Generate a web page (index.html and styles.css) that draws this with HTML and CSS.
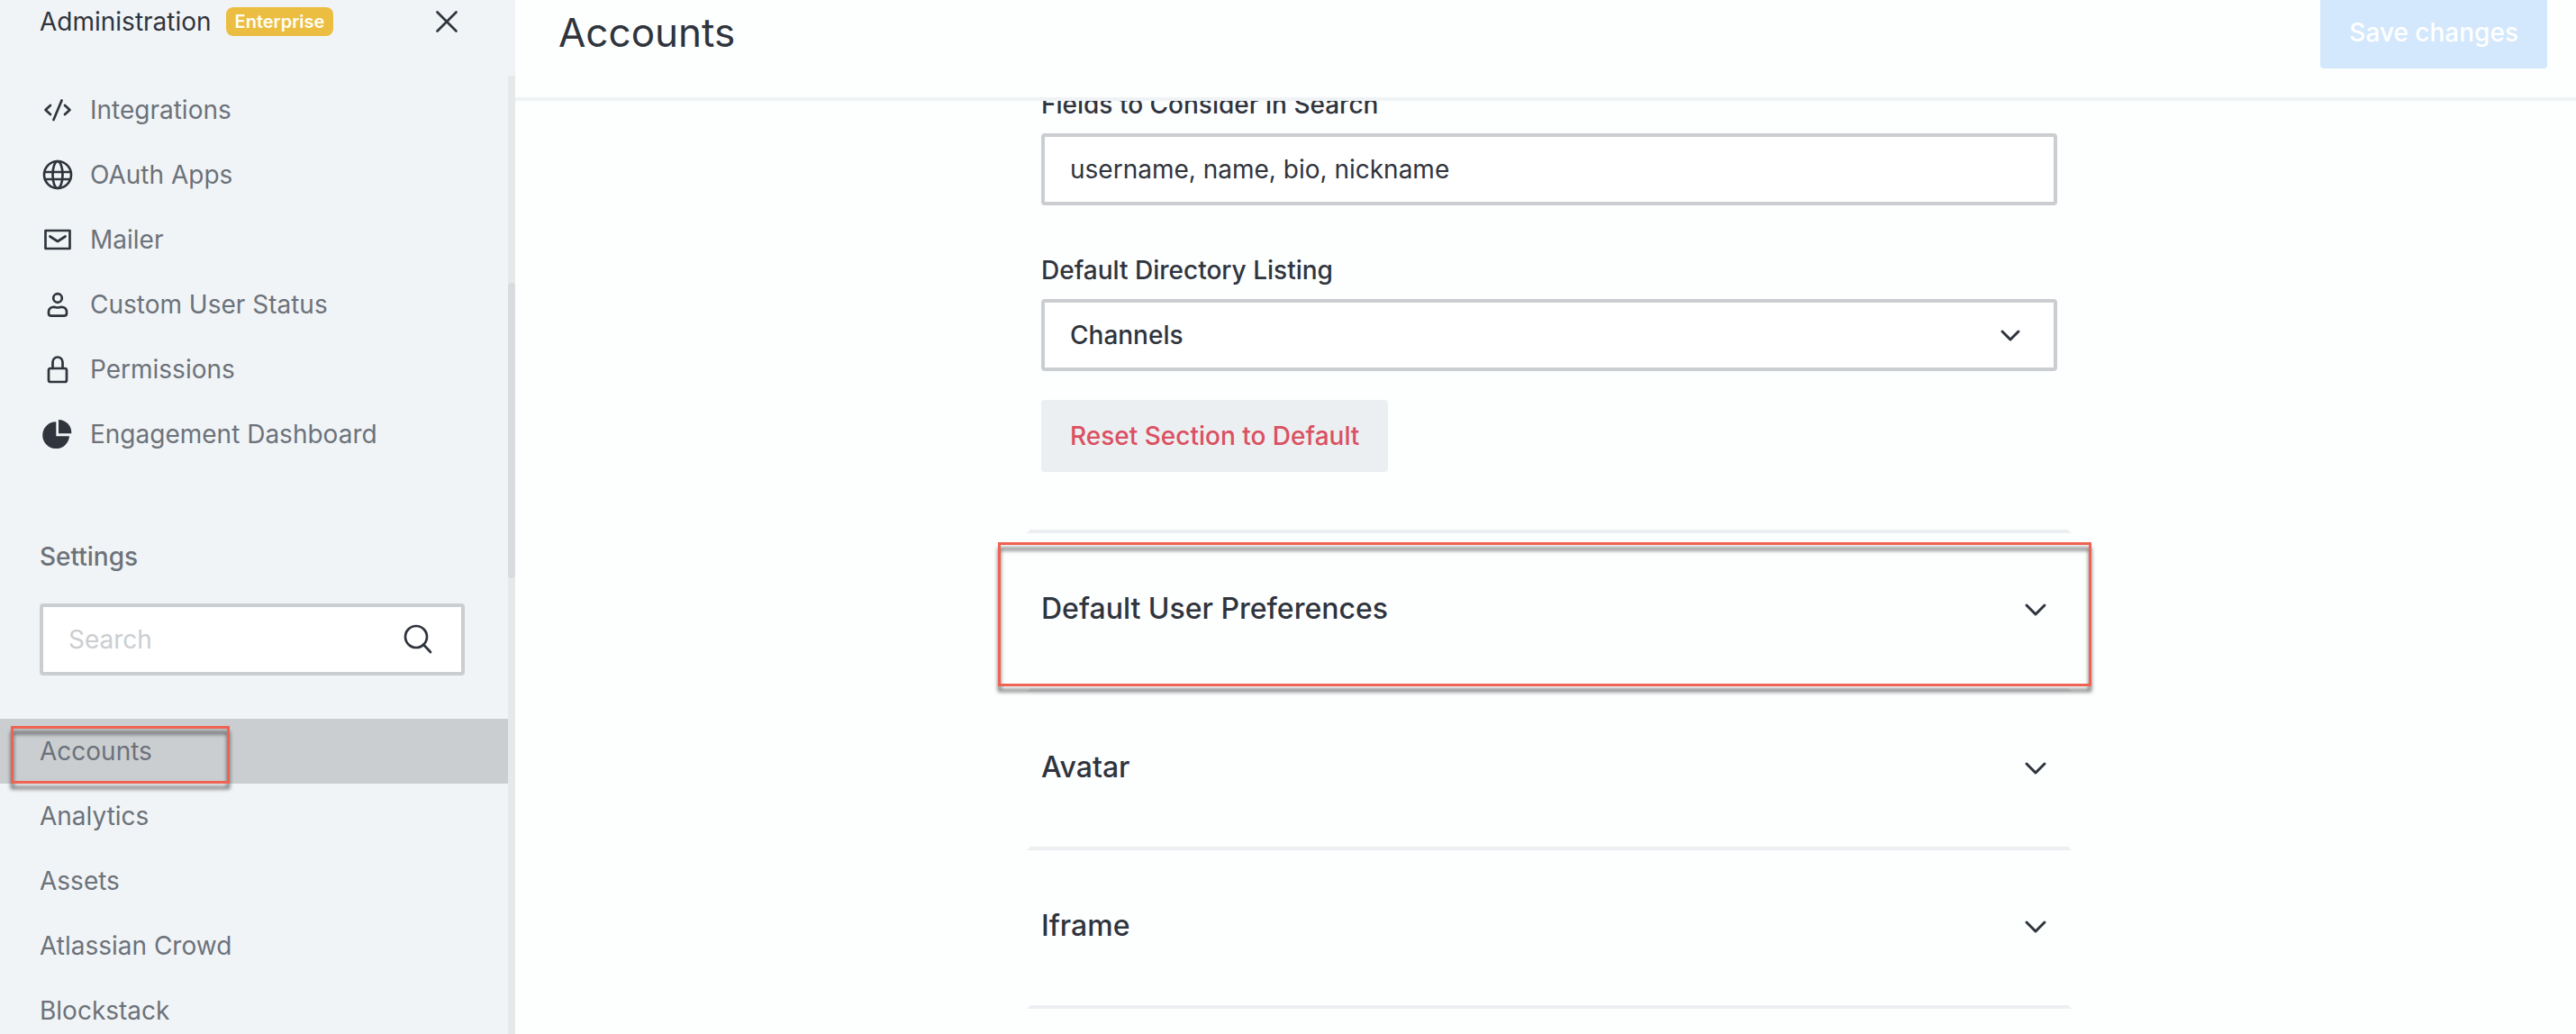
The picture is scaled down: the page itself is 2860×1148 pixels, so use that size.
FILE: index.html
```html
<!DOCTYPE html>
<html lang="en">
<head>
<meta charset="utf-8">
<title>Accounts - Administration</title>
<link rel="stylesheet" href="styles.css">
</head>
<body>
<div class="app">
  <aside class="sidebar">
    <header class="sidebar-header">
      <span class="sidebar-title">Administration</span>
      <span class="badge">Enterprise</span>
      <button class="close" type="button" aria-label="Close">
        <svg viewBox="0 0 40 40"><path d="M9.500 9.500 30.500 30.500M30.500 9.500 9.500 30.500"/></svg>
      </button>
    </header>
    <div class="sidebar-body">
      <div class="sidebar-content">
        <nav class="nav">
          <a class="nav-item" href="#integrations">
            <svg class="icon" viewBox="0 0 40 40"><path d="M12 15 6.500 20l5.500 5M28 15l5.500 5-5.500 5M24.500 9.500 15.500 31"/></svg>
            Integrations
          </a>
          <a class="nav-item" href="#oauth">
            <svg class="icon" viewBox="0 0 40 40"><circle cx="20" cy="20" r="15"/><ellipse cx="20" cy="20" rx="5.500" ry="15"/><path d="M6 17h28M6 25h28"/></svg>
            OAuth Apps
          </a>
          <a class="nav-item" href="#mailer">
            <svg class="icon" viewBox="0 0 40 40"><path d="M6.500 10h27v20h-27zM11.500 16.500l8.500 5.500 8.500-5.500"/></svg>
            Mailer
          </a>
          <a class="nav-item" href="#user-status">
            <svg class="icon" viewBox="0 0 40 40"><circle cx="20" cy="13" r="4.800"/><path d="M14.500 23c3-.5 3.500.5 5.500.500s2.500-1 5.500-.500c3 .500 4.500 2.500 4.500 5.500v1.500c0 2-1 2.700-3 2.700H13c-2 0-3-.7-3-2.700v-1.500c0-3 1.500-5 4.500-5.500z"/></svg>
            Custom User Status
          </a>
          <a class="nav-item" href="#permissions">
            <svg class="icon" viewBox="0 0 40 40"><rect x="10" y="19" width="20" height="15" rx="2"/><path d="M14.500 19v-7a5.500 5.500 0 0 1 11 0v7"/></svg>
            Permissions
          </a>
          <a class="nav-item" href="#engagement">
            <svg class="icon icon-solid" viewBox="0 0 40 40"><path d="M18.300 6.300v16h14.700A14.900 14.900 0 1 1 18.300 6.300z"/><path d="M21 4a14.300 14.300 0 0 1 14.300 15.300H21z"/></svg>
            Engagement Dashboard
          </a>
        </nav>
        <h2 class="settings-title">Settings</h2>
        <label class="search">
          <input class="search-input" type="search" placeholder="Search" aria-label="Search">
          <svg class="icon" viewBox="0 0 40 40"><circle cx="18" cy="17" r="12"/><path d="M26 25.500 34 34"/></svg>
        </label>
        <nav class="nav settings-nav">
          <a class="nav-item active" href="#accounts">Accounts<span class="highlight highlight-nav"></span></a>
          <a class="nav-item" href="#analytics">Analytics</a>
          <a class="nav-item" href="#assets">Assets</a>
          <a class="nav-item" href="#crowd">Atlassian Crowd</a>
          <a class="nav-item" href="#blockstack">Blockstack</a>
        </nav>
      </div>
      <div class="scrollbar"><div class="scrollbar-thumb"></div></div>
    </div>
  </aside>
  <main class="main">
    <header class="main-header">
      <h1 class="main-title">Accounts</h1>
      <button class="save" type="button" disabled>Save changes</button>
    </header>
    <div class="main-body">
      <div class="page">
        <form class="fields">
          <div class="field">
            <label class="label" for="search-fields">Fields to Consider in Search</label>
            <input class="control" id="search-fields" type="text" value="username, name, bio, nickname">
          </div>
          <div class="field">
            <label class="label" for="listing">Default Directory Listing</label>
            <div class="select-wrap">
              <select class="control select" id="listing"><option>Channels</option><option>Users</option></select>
              <svg class="chevron select-chevron" viewBox="0 0 32 32"><path d="M7 12l9 9 9-9"/></svg>
            </div>
          </div>
          <button class="reset" type="button">Reset Section to Default</button>
        </form>
        <section class="section">
          <button class="section-toggle" type="button">Default User Preferences
            <svg class="chevron" viewBox="0 0 32 32"><path d="M6 12l10 10 10-10"/></svg>
          </button>
          <span class="highlight highlight-section"></span>
        </section>
        <section class="section">
          <button class="section-toggle" type="button">Avatar
            <svg class="chevron" viewBox="0 0 32 32"><path d="M6 12l10 10 10-10"/></svg>
          </button>
        </section>
        <section class="section">
          <button class="section-toggle" type="button">Iframe
            <svg class="chevron" viewBox="0 0 32 32"><path d="M6 12l10 10 10-10"/></svg>
          </button>
        </section>
      </div>
    </div>
  </main>
</div>
</body>
</html>
```

FILE: styles.css
```css
* { box-sizing: border-box; }

body {
  margin: 0;
  background: #fdfefe;
  color: #2f343d;
  font: 400 28px/40px Inter, sans-serif;
}

button, input, select { font: inherit; color: inherit; margin: 0; }

.app { display: flex; height: 100vh; overflow: hidden; }

.sidebar {
  display: flex;
  flex-direction: column;
  flex: 0 0 20%;
  max-width: 572px;
  background: #f1f4f6;
}

.sidebar-header {
  display: flex;
  align-items: center;
  gap: 16px;
  height: 84px;
  padding: 0 56px 36px 44px;
}

.badge {
  padding: 0 10px;
  border-radius: 8px;
  background: #ebbd41;
  color: #fffef5;
  font-size: 20px;
  font-weight: 600;
  line-height: 32px;
}

.close {
  width: 40px;
  height: 40px;
  margin-left: auto;
  padding: 0;
  border: 0;
  background: none;
}

.close svg, .icon, .chevron {
  display: block;
  flex: none;
  width: 40px;
  height: 40px;
  fill: none;
  stroke: #2f343d;
  stroke-width: 2.7;
  stroke-linecap: round;
  stroke-linejoin: round;
}

.icon-solid { fill: #2f343d; stroke: none; }

.sidebar-body { display: flex; flex: 1; min-height: 0; }
.sidebar-content { flex: 1; padding-top: 2px; overflow: hidden; }

.scrollbar { position: relative; width: 8px; background: #e5e9ea; }

.scrollbar-thumb {
  position: absolute;
  top: 230px;
  width: 8px;
  height: 328px;
  border-radius: 4px;
  background: #d9dcde;
}

.nav { display: flex; flex-direction: column; }

.nav-item {
  position: relative;
  display: flex;
  align-items: center;
  gap: 16px;
  padding: 16px 44px;
  color: #6c727a;
  text-decoration: none;
}

.nav-item.active { background: #cbced1; }

.settings-title {
  margin: 80px 44px 32px;
  color: #6c727a;
  font-size: 28px;
  font-weight: 500;
}

.search {
  display: flex;
  align-items: center;
  height: 80px;
  margin: 0 48px 0 44px;
  padding: 0 28px;
  border: 4px solid #cbced1;
  border-radius: 4px;
  background: #fff;
}

.search-input {
  flex: 1;
  min-width: 0;
  padding: 0;
  border: 0;
  outline: 0;
  background: none;
}

.search-input::placeholder { color: #cbced1; }

.settings-nav { margin-top: 48px; }

.highlight {
  position: absolute;
  border: 3px solid #ee6352;
  filter: drop-shadow(0 6px 2px rgba(0, 0, 0, 0.6));
  pointer-events: none;
}

.highlight-nav { top: 8px; left: 12px; width: 243px; height: 64px; z-index: 1; }
.highlight-section { inset: 10px -26px 2px -36px; }

.main { display: flex; flex: 1; flex-direction: column; min-width: 0; }

.main-header {
  display: flex;
  flex: none;
  align-items: flex-end;
  justify-content: space-between;
  height: 112px;
  padding: 0 32px 32px 48px;
  border-bottom: 4px solid #f0f3f5;
}

.main-title {
  margin: 0;
  font-size: 44px;
  font-weight: 400;
  line-height: 80px;
}

.save, .reset {
  height: 80px;
  padding: 0 32px;
  border: 0;
  border-radius: 4px;
  font-weight: 500;
}

.save { background: #d3e8fc; color: #fff; }

.main-body { flex: 1; min-height: 0; padding-left: 8px; overflow: hidden; }

.page { max-width: 1160px; margin: -16px auto 0; }

.fields {
  display: flex;
  flex-direction: column;
  align-items: flex-start;
  padding: 0 12px 64px;
  border: 4px solid transparent;
  border-top: 0;
  border-bottom-color: #eceff1;
}

.field { width: 100%; margin-bottom: 52px; }
.field:nth-child(2) { margin-bottom: 32px; }

.label {
  display: block;
  margin-bottom: 12px;
  font-weight: 500;
}

.control {
  display: block;
  width: 100%;
  height: 80px;
  padding: 0 28px;
  border: 4px solid #cbced1;
  border-radius: 4px;
  background: #fff;
}

.select-wrap { position: relative; }
.select { appearance: none; font-weight: 500; }

.reset { background: #eceff1; color: #db5062; }

.section {
  position: relative;
  height: 176px;
  border: 4px solid transparent;
  border-top: 0;
  border-bottom-color: #eceff1;
}

.section-toggle {
  display: flex;
  align-items: center;
  justify-content: space-between;
  width: 100%;
  padding: 62px 20px 66px 12px;
  border: 0;
  background: none;
  font-size: 32px;
  font-weight: 500;
  line-height: 44px;
  text-align: left;
}

.chevron { width: 32px; height: 32px; stroke-width: 3; }

.select-chevron {
  position: absolute;
  top: 24px;
  right: 36px;
}
```
